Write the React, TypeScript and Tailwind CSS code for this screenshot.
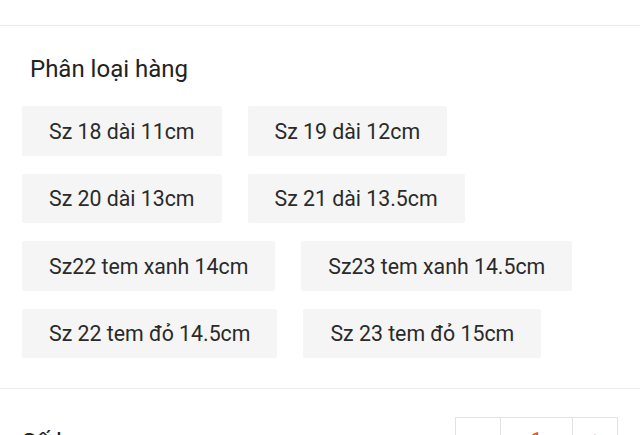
import React from 'react';

const rows: string[][] = [
    ['Sz 18 dài 11cm', 'Sz 19 dài 12cm'],
    ['Sz 20 dài 13cm', 'Sz 21 dài 13.5cm'],
    ['Sz22 tem xanh 14cm', 'Sz23 tem xanh 14.5cm'],
    ['Sz 22 tem đỏ 14.5cm', 'Sz 23 tem đỏ 15cm'],
];

export default function App() {
    return (
        <div className="w-[640px] h-[435px] overflow-hidden bg-white font-['Roboto','Noto_Sans',sans-serif]">
            <div className="h-[26px] border-b border-[#ececec]" />

            <div className="px-[22px] pt-[29px] pb-[30px] border-b border-[#ededed]">
                <h3 className="pl-[8px] text-[24px] leading-[28px] text-[#222]">Phân loại hàng</h3>
                <div className="mt-[23px] flex flex-col gap-[18px]">
                    {rows.map((row, i) => (
                        <div key={i} className="flex gap-[26px]">
                            {row.map((label) => (
                                <button
                                    key={label}
                                    className="h-[49.5px] px-[27px] pt-[2px] flex items-center bg-[#f5f5f5] rounded-[2px] text-[21.3px] text-[#2a2a2a] whitespace-nowrap"
                                >
                                    {label}
                                </button>
                            ))}
                        </div>
                    ))}
                </div>
            </div>

            <div className="px-[22px] pt-[28px] flex justify-between items-start">
                <span className="mt-[11px] text-[24px] leading-[28px] text-[#222]">Số lượng</span>
                <div className="flex h-[44px] border border-[#e3e3e3]">
                    <button className="w-[44px] pt-[2px] flex items-center justify-center text-[22px] text-[#bbb]">−</button>
                    <div className="w-[73px] pt-[2px] flex items-center justify-center border-x border-[#e3e3e3] text-[20px] text-[#ee4d2d]">1</div>
                    <button className="w-[44px] pt-[2px] flex items-center justify-center text-[22px] text-[#bbb]">+</button>
                </div>
            </div>
        </div>
    );
}
